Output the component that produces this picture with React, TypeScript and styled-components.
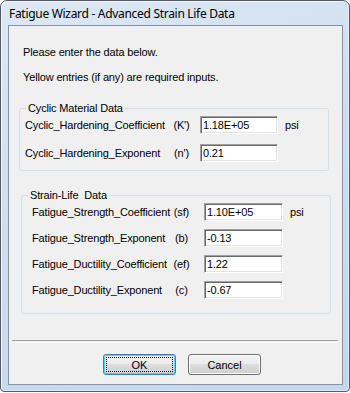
import styled, { createGlobalStyle } from "styled-components";

interface Field {
  label: string;
  symbol: string;
  value: string;
  unit?: string;
}

const cyclicFields: Field[] = [
  { label: "Cyclic_Hardening_Coefficient", symbol: "(K')", value: "1.18E+05", unit: "psi" },
  { label: "Cyclic_Hardening_Exponent", symbol: "(n')", value: "0.21" },
];

const strainFields: Field[] = [
  { label: "Fatigue_Strength_Coefficient", symbol: "(sf)", value: "1.10E+05", unit: "psi" },
  { label: "Fatigue_Strength_Exponent", symbol: "(b)", value: "-0.13" },
  { label: "Fatigue_Ductility_Coefficient", symbol: "(ef)", value: "1.22" },
  { label: "Fatigue_Ductility_Exponent", symbol: "(c)", value: "-0.67" },
];

function FieldRows({ fields, labelW, symbolW, symbolPad, inputW }: {
  fields: Field[];
  labelW: number;
  symbolW: number;
  symbolPad: number;
  inputW: number;
}) {
  return (
    <>
      {fields.map((f) => (
        <Row key={f.label} $cols={`${labelW}px ${symbolW}px ${inputW}px auto`}>
          <FieldLabel>{f.label}</FieldLabel>
          <Symbol $pad={symbolPad}>{f.symbol}</Symbol>
          <TextBox readOnly value={f.value} />
          <Unit>{f.unit}</Unit>
        </Row>
      ))}
    </>
  );
}

export default function App() {
  return (
    <>
      <GlobalStyle />
      <Window>
        <TitleBar>Fatigue Wizard - Advanced Strain Life Data</TitleBar>
        <Client>
          <Intro>Please enter the data below.</Intro>
          <Intro $gap={12}>Yellow entries (if any) are required inputs.</Intro>

          <Group $left={10} $top={18} $pad="1px 0 8px 5px" $rowGap={10}>
            <Legend $shift={1}>Cyclic Material Data</Legend>
            <FieldRows fields={cyclicFields} labelW={143} symbolW={32} symbolPad={5} inputW={78} />
          </Group>

          <Group $left={12} $top={18} $pad="1px 0 14px 10px" $rowGap={8}>
            <Legend $shift={-4}>Strain-Life&nbsp; Data</Legend>
            <FieldRows fields={strainFields} labelW={136} symbolW={36} symbolPad={9} inputW={79} />
          </Group>

          <Separator />

          <ButtonBar>
            <DialogButton $default>OK</DialogButton>
            <DialogButton>Cancel</DialogButton>
          </ButtonBar>
        </Client>
      </Window>
    </>
  );
}

const GlobalStyle = createGlobalStyle`
  html, body {
    margin: 0;
    padding: 0;
    background: #ffffff;
  }
  body {
    font-family: "Liberation Sans", Arial, sans-serif;
  }
`;

const Window = styled.div`
  box-sizing: border-box;
  width: 350px;
  height: 392px;
  padding: 0 6px 6px 7px;
  display: flex;
  flex-direction: column;
  border: 1px solid #4f5b6a;
  border-radius: 7px 7px 4px 4px;
  background: linear-gradient(160deg, #dde8f4 0%, #cfdff0 40%, #c3d7ed 100%);
  box-shadow: inset 1px 1px 0 rgba(255, 255, 255, 0.75), inset -1px -1px 0 rgba(255, 255, 255, 0.45);
`;

const TitleBar = styled.div`
  height: 24px;
  display: flex;
  align-items: center;
  padding-left: 1px;
  font-family: "Noto Sans", "Open Sans", sans-serif;
  font-size: 12px;
  letter-spacing: -0.3px;
  color: #000000;
  white-space: nowrap;
`;

const Client = styled.div`
  flex: 1;
  display: flex;
  flex-direction: column;
  padding-top: 20px;
  border: 1px solid #8394a8;
  background: #f0f0f0;
  font-size: 11px;
  letter-spacing: -0.15px;
  color: #000000;
`;

const Intro = styled.div<{ $gap?: number }>`
  margin: ${(p) => p.$gap ?? 0}px 0 0 14px;
  line-height: 13px;
`;

const Group = styled.fieldset<{ $left: number; $top: number; $pad: string; $rowGap: number }>`
  box-sizing: border-box;
  width: 310px;
  margin: ${(p) => p.$top}px 0 0 ${(p) => p.$left}px;
  padding: ${(p) => p.$pad};
  border: 1px solid #d5dfe5;
  border-radius: 3px;
  display: flex;
  flex-direction: column;
  gap: ${(p) => p.$rowGap}px;
  min-inline-size: 0;
`;

const Legend = styled.legend<{ $shift: number }>`
  margin-left: ${(p) => p.$shift}px;
  padding: 0 2px;
  line-height: 13px;
  font-size: 11px;
`;

const Row = styled.div<{ $cols: string }>`
  display: grid;
  grid-template-columns: ${(p) => p.$cols};
  align-items: center;
  height: 18px;
`;

const FieldLabel = styled.span`
  white-space: nowrap;
`;

const Symbol = styled.span<{ $pad: number }>`
  text-align: center;
  padding-right: ${(p) => p.$pad}px;
`;

const TextBox = styled.input`
  box-sizing: border-box;
  width: 100%;
  height: 18px;
  margin: 0;
  padding: 0 0 0 2px;
  border: 1px solid;
  border-color: #a0a0a0 #ffffff #ffffff #a0a0a0;
  box-shadow: inset 1px 1px 0 #696969, inset -1px -1px 0 #e3e3e3;
  background: #ffffff;
  font-family: "Liberation Sans", Arial, sans-serif;
  font-size: 11px;
  letter-spacing: -0.15px;
  color: #000000;
  outline: none;
`;

const Unit = styled.span`
  padding-left: 7px;
`;

const Separator = styled.div`
  margin: 26px 4px 0 3px;
  height: 1px;
  border-top: 1px solid #a0a0a0;
  border-bottom: 1px solid #ffffff;
`;

const ButtonBar = styled.div`
  display: flex;
  gap: 12px;
  margin-top: 11px;
  padding-left: 94px;
`;

const DialogButton = styled.button<{ $default?: boolean }>`
  box-sizing: border-box;
  width: 73px;
  height: 21px;
  padding: 0;
  border: 1px solid ${(p) => (p.$default ? "#3c7fb1" : "#707070")};
  border-radius: 3px;
  background: linear-gradient(180deg, #f2f2f2 0%, #ebebeb 50%, #dddddd 50%, #cfcfcf 100%);
  box-shadow: ${(p) => (p.$default ? "inset 0 0 0 1px #4fd3f7" : "inset 0 0 0 1px #fcfcfc")};
  outline: ${(p) => (p.$default ? "1px dotted #000000" : "none")};
  outline-offset: -4px;
  font-family: "Liberation Sans", Arial, sans-serif;
  font-size: 11px;
  color: #000000;
`;
